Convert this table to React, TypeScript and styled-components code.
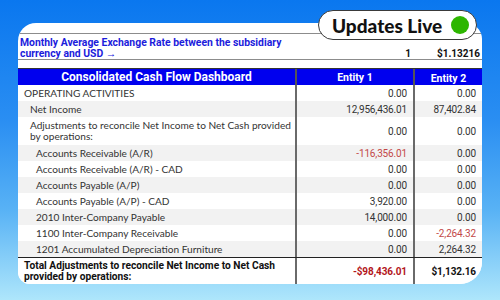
import React from "react";
import styled, { createGlobalStyle } from "styled-components";

const Global = createGlobalStyle`
  html, body { margin: 0; padding: 0; }
  body { width: 500px; height: 300px; overflow: hidden; }
  * { box-sizing: border-box; }
`;

const COLS = "277px 118px 1fr";
const BOLD = `"Roboto", "Liberation Sans", sans-serif`;
const LABEL = `"Lato", "Noto Sans", sans-serif`;
const NUM = `"Roboto", "Noto Sans", sans-serif`;

const Page = styled.div`
  position: relative;
  width: 500px;
  height: 300px;
  padding: 23px 18px 0 18px;
  background: linear-gradient(180deg, #0a77ef 0%, #2a8ef2 40%, #58b2f5 70%, #aee6fb 100%);
`;

const Card = styled.div`
  width: 464px;
  height: 261px;
  background: #fff;
  border-radius: 18px 16px 22px 12px;
  overflow: hidden;
  padding-top: 10px;
  display: flex;
  flex-direction: column;
`;

const RateBlock = styled.div`
  display: grid;
  grid-template-columns: ${COLS};
  align-items: end;
  height: 27px;
  border-top: 1px solid #8c8c8c;
  border-bottom: 1.5px solid #8c8c8c;
  padding-bottom: 2px;
`;

const RateTitle = styled.div`
  align-self: start;
  padding: 3px 0 0 2px;
  width: 275px;
  font-family: ${BOLD};
  font-weight: 700;
  font-size: 10.4px;
  line-height: 11px;
  color: #1c1cdc;
`;

const RateValue = styled.div`
  text-align: right;
  padding-right: 2px;
  font-family: ${BOLD};
  font-weight: 700;
  font-size: 10px;
  line-height: 11px;
  color: #111;
`;

const Spacer = styled.div`
  height: 8px;
`;

const HeaderRow = styled.div`
  display: grid;
  grid-template-columns: ${COLS};
  height: 17px;
  background: #0000ee;
  border-top: 1px solid #333;
`;

const HeaderCell = styled.div<{ $sep?: boolean; $drop?: number }>`
  display: flex;
  align-items: center;
  justify-content: center;
  padding-top: ${(p) => p.$drop ?? 0}px;
  border-left: ${(p) => (p.$sep ? "2px solid #555" : "none")};
  color: #fff;
  font-family: ${BOLD};
  font-weight: 700;
  font-size: ${(p) => (p.$sep ? 10.5 : 12)}px;
  white-space: nowrap;
`;

const Row = styled.div<{ $h: number; $shade?: boolean; $total?: boolean }>`
  display: grid;
  grid-template-columns: ${COLS};
  height: ${(p) => p.$h}px;
  flex-shrink: 0;
  background: ${(p) => (p.$shade ? "#f2f2f2" : "#fff")};
  border-top: ${(p) => (p.$total ? "1.5px solid #222" : "none")};
`;

const Label = styled.div<{ $indent: number; $bold?: boolean }>`
  display: flex;
  align-items: center;
  padding-left: ${(p) => p.$indent}px;
  padding-right: 0;
  font-family: ${(p) => (p.$bold ? BOLD : LABEL)};
  font-weight: ${(p) => (p.$bold ? 700 : 400)};
  font-size: ${(p) => (p.$bold ? 10.2 : 10.1)}px;
  line-height: 11px;
  color: ${(p) => (p.$bold ? "#111" : "#333")};
`;

const Num = styled.div<{ $neg?: boolean; $bold?: boolean }>`
  display: flex;
  align-items: center;
  justify-content: flex-end;
  padding-right: 6px;
  border-left: 2px solid #6a6a6a;
  font-family: ${(p) => (p.$bold ? BOLD : NUM)};
  font-weight: ${(p) => (p.$bold ? 700 : 400)};
  font-size: 10px;
  letter-spacing: ${(p) => (p.$bold ? "-0.1px" : "-0.15px")};
  color: ${(p) => (p.$neg ? (p.$bold ? "#b3161c" : "#c24848") : p.$bold ? "#111" : "#333")};
`;

const Pill = styled.div`
  position: absolute;
  top: 10px;
  left: 318px;
  width: 159px;
  height: 30px;
  border: 1.5px solid #3a3a3a;
  border-radius: 16px;
  background: #fff;
  display: flex;
  align-items: center;
  justify-content: space-between;
  padding: 0 7px 0 13px;
`;

const PillText = styled.span`
  font-family: "Lato", "Noto Sans", sans-serif;
  font-weight: 900;
  font-size: 19px;
  color: #111;
`;

const Dot = styled.span`
  width: 18px;
  height: 18px;
  border-radius: 50%;
  background: #2db600;
`;

type R = {
  label: string;
  indent: number;
  h: number;
  v1: string;
  v2: string;
};

const rows: R[] = [
  { label: "OPERATING ACTIVITIES", indent: 6, h: 16, v1: "0.00", v2: "0.00" },
  { label: "Net Income", indent: 12, h: 16, v1: "12,956,436.01", v2: "87,402.84" },
  {
    label: "Adjustments to reconcile Net Income to Net Cash provided by operations:",
    indent: 12,
    h: 28,
    v1: "0.00",
    v2: "0.00",
  },
  { label: "Accounts Receivable (A/R)", indent: 18, h: 16, v1: "-116,356.01", v2: "0.00" },
  { label: "Accounts Receivable (A/R) - CAD", indent: 18, h: 16, v1: "0.00", v2: "0.00" },
  { label: "Accounts Payable (A/P)", indent: 18, h: 16, v1: "0.00", v2: "0.00" },
  { label: "Accounts Payable (A/P) - CAD", indent: 18, h: 16, v1: "3,920.00", v2: "0.00" },
  { label: "2010 Inter-Company Payable", indent: 18, h: 16, v1: "14,000.00", v2: "0.00" },
  { label: "1100 Inter-Company Receivable", indent: 18, h: 16, v1: "0.00", v2: "-2,264.32" },
  { label: "1201 Accumulated Depreciation Furniture", indent: 18, h: 16, v1: "0.00", v2: "2,264.32" },
];

export default function App() {
  return (
    <>
      <Global />
      <Page>
        <Card>
          <RateBlock>
            <RateTitle>
              Monthly Average Exchange Rate between the subsidiary currency and USD →
            </RateTitle>
            <RateValue>1</RateValue>
            <RateValue>$1.13216</RateValue>
          </RateBlock>
          <Spacer />
          <HeaderRow>
            <HeaderCell>Consolidated Cash Flow Dashboard</HeaderCell>
            <HeaderCell $sep>Entity 1</HeaderCell>
            <HeaderCell $sep $drop={2}>
              Entity 2
            </HeaderCell>
          </HeaderRow>
          {rows.map((r, i) => (
            <Row key={r.label} $h={r.h} $shade={i % 2 === 1}>
              <Label $indent={r.indent}>{r.label}</Label>
              <Num $neg={r.v1.startsWith("-")}>{r.v1}</Num>
              <Num $neg={r.v2.startsWith("-")}>{r.v2}</Num>
            </Row>
          ))}
          <Row $h={27} $total>
            <Label $indent={6} $bold>
              Total Adjustments to reconcile Net Income to Net Cash provided by operations:
            </Label>
            <Num $neg $bold>
              -$98,436.01
            </Num>
            <Num $bold>$1,132.16</Num>
          </Row>
        </Card>
        <Pill>
          <PillText>Updates Live</PillText>
          <Dot />
        </Pill>
      </Page>
    </>
  );
}
